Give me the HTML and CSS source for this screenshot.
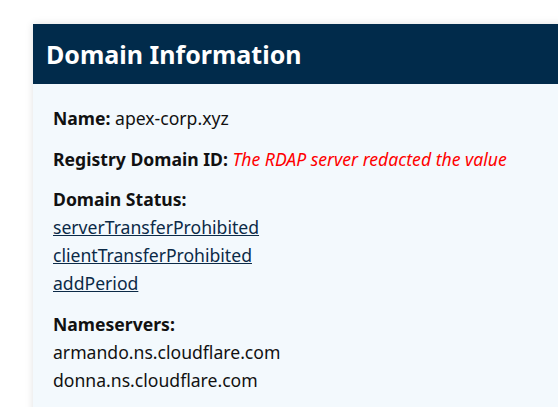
FILE: index.html
```html
<!DOCTYPE html>
<html lang="en">
<head>
  <meta charset="UTF-8" />
  <meta name="viewport" content="width=device-width, initial-scale=1.0" />
  <title>Domain Information</title>
  <link rel="stylesheet" href="styles.css">
</head>
<body>
  <div class="card">
    <h2 class="card-title">Domain Information</h2>
    <div class="card-body">
      <div class="field">
        <strong>Name:</strong> apex-corp.xyz
      </div>
      <div class="field">
        <strong>Registry Domain ID:</strong> <em class="redacted">The RDAP server redacted the value</em>
      </div>
      <div class="field">
        <strong>Domain Status:</strong>
        <ul class="list">
          <li><a href="#">serverTransferProhibited</a></li>
          <li><a href="#">clientTransferProhibited</a></li>
          <li><a href="#">addPeriod</a></li>
        </ul>
      </div>
      <div class="field">
        <strong>Nameservers:</strong>
        <ul class="list">
          <li>armando.ns.cloudflare.com</li>
          <li>donna.ns.cloudflare.com</li>
        </ul>
      </div>
    </div>
  </div>
</body>
</html>
```

FILE: styles.css
```css
html, body {
  overflow: hidden;
}

body {
  font-family: 'Noto Sans', sans-serif;
  font-size: 16px;
  color: #111;
  background: #fff;
  margin: 0;
  padding: 24px 0 0 33px;
}

.card {
  width: 620px;
  background: #f3f9fd;
  box-shadow: 0 0 8px rgba(0, 0, 0, 0.12);
}

.card-title {
  margin: 0;
  background: #012b4b;
  color: #fff;
  font-size: 25px;
  font-weight: 700;
  line-height: 36px;
  padding: 12px 13px;
}

.card-body {
  padding: 20px;
  font-size: 1.1rem;
  line-height: 28px;
}

.field {
  margin-bottom: 12.5px;
}

.list {
  list-style: none;
  margin: 0;
  padding: 0;
}

.list a {
  color: #0b2a47;
  text-decoration: underline;
}

.redacted {
  color: #f00;
}
```
